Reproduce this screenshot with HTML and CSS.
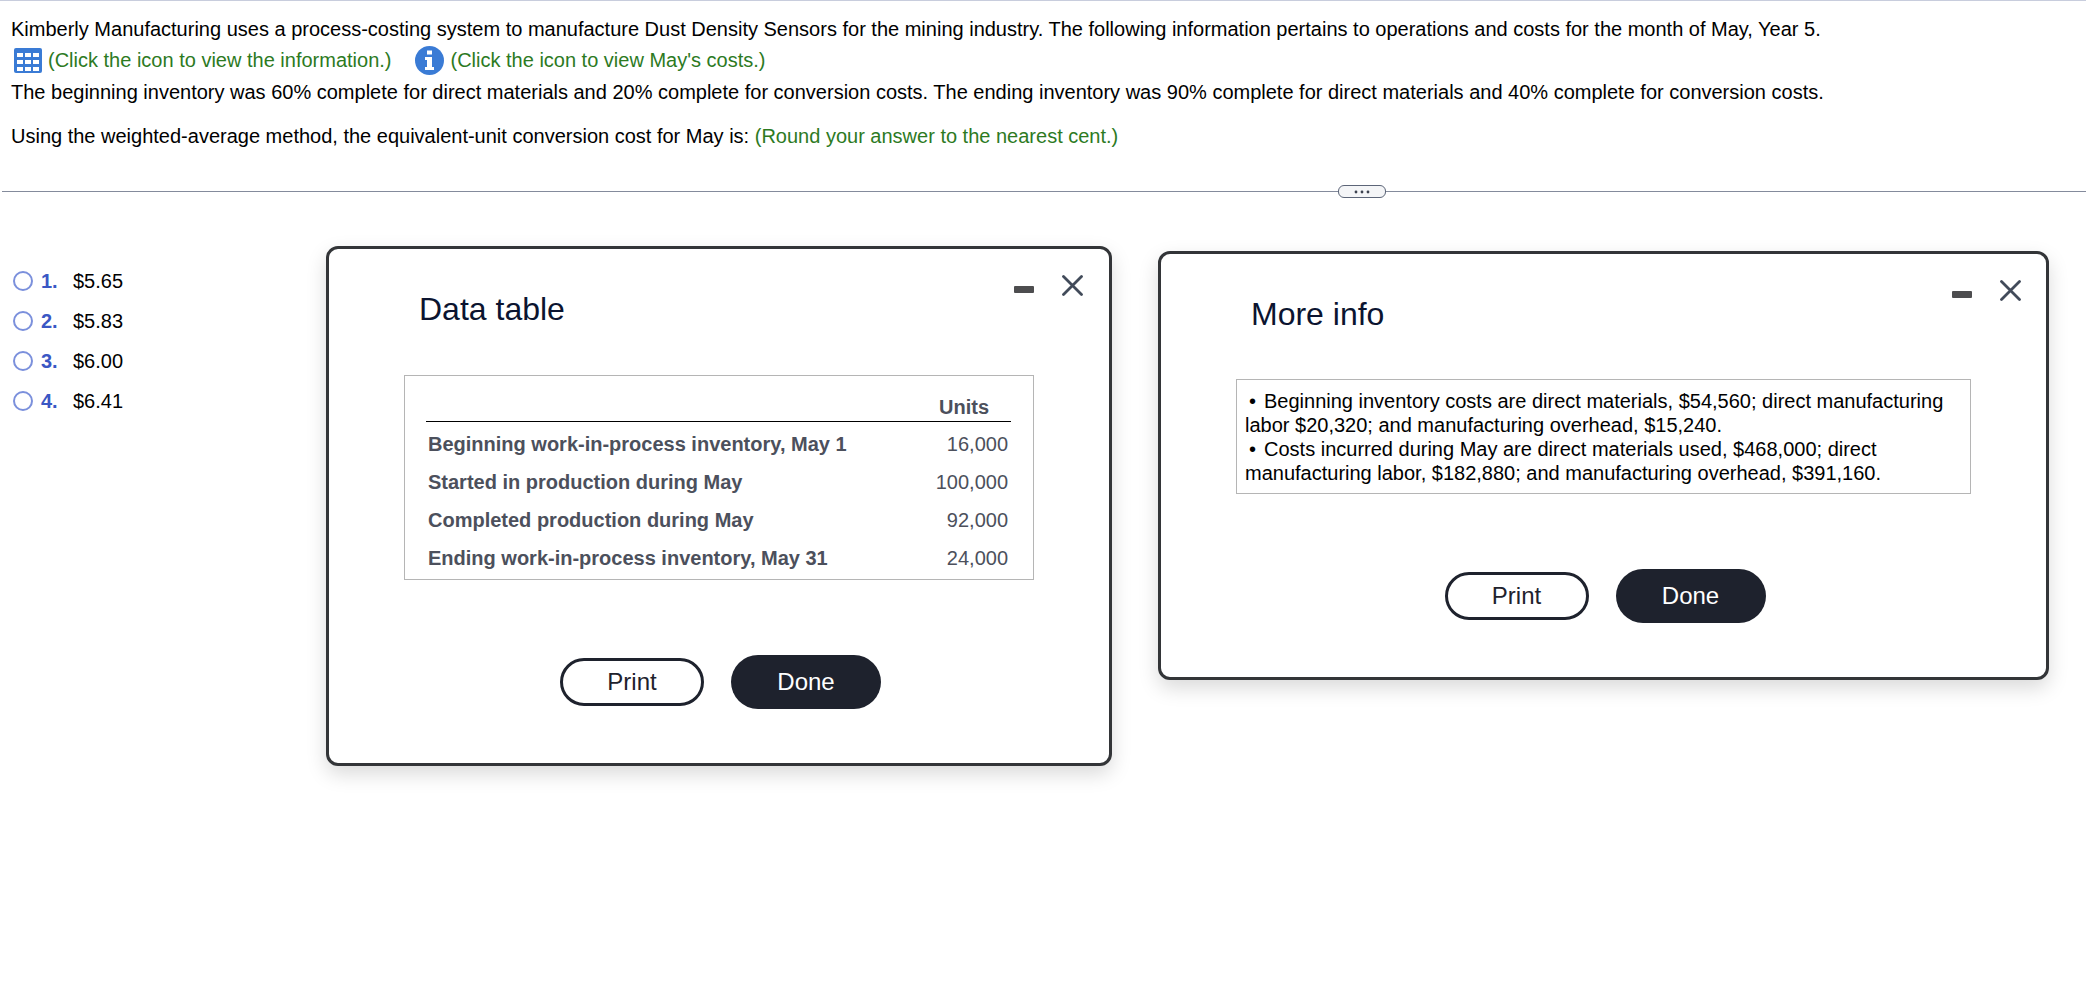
FILE: index.html
```html
<!DOCTYPE html>
<html lang="en">
<head>
    <meta charset="UTF-8">
    <meta name="viewport" content="width=device-width, initial-scale=1.0">
    <title>Process Costing Question</title>
    <link rel="stylesheet" href="styles.css">
</head>
<body>
    <section class="question">
        <p>Kimberly Manufacturing uses a process-costing system to manufacture Dust Density Sensors for the mining industry. The following information pertains to operations and costs for the month of May, Year 5.</p>
        <div class="links">
            <button type="button" class="iconLink">
                <svg width="28" height="25" viewBox="0 0 28 25" aria-hidden="true">
                    <rect width="28" height="25" rx="2" fill="#3a7bd5"/>
                    <g fill="#fff">
                        <rect x="3" y="5" width="6" height="4"/><rect x="11" y="5" width="6" height="4"/><rect x="19" y="5" width="6" height="4"/>
                        <rect x="3" y="12" width="6" height="4"/><rect x="11" y="12" width="6" height="4"/><rect x="19" y="12" width="6" height="4"/>
                        <rect x="3" y="19" width="6" height="4"/><rect x="11" y="19" width="6" height="4"/><rect x="19" y="19" width="6" height="4"/>
                    </g>
                </svg>
                <span>(Click the icon to view the information.)</span>
            </button>
            <button type="button" class="iconLink">
                <svg width="29" height="29" viewBox="0 0 29 29" aria-hidden="true">
                    <circle cx="14.5" cy="14.5" r="14.5" fill="#3a7bd5"/>
                    <path fill="#fff" d="M12 4.5h5v4h-5zM10 11h7v10h2v3h-9v-3h2v-7h-2z"/>
                </svg>
                <span>(Click the icon to view May's costs.)</span>
            </button>
        </div>
        <p>The beginning inventory was 60% complete for direct materials and 20% complete for conversion costs. The ending inventory was 90% complete for direct materials and 40% complete for conversion costs.</p>
        <p class="ask">Using the weighted-average method, the equivalent-unit conversion cost for May is: <span class="hint">(Round your answer to the nearest cent.)</span></p>
    </section>

    <div class="divider">
        <button type="button" class="handle" aria-label="Resize">
            <svg width="20" height="4" viewBox="0 0 20 4" fill="#3c4250" aria-hidden="true">
                <circle cx="4" cy="2" r="1.4"/><circle cx="10" cy="2" r="1.4"/><circle cx="16" cy="2" r="1.4"/>
            </svg>
        </button>
    </div>

    <main>
        <form class="choices">
            <label><input type="radio" name="answer" value="1"><b>1.</b><span>$5.65</span></label>
            <label><input type="radio" name="answer" value="2"><b>2.</b><span>$5.83</span></label>
            <label><input type="radio" name="answer" value="3"><b>3.</b><span>$6.00</span></label>
            <label><input type="radio" name="answer" value="4"><b>4.</b><span>$6.41</span></label>
        </form>

        <section class="dialog">
            <header>
                <h2>Data table</h2>
                <div class="controls">
                    <button type="button" class="minimize" aria-label="Minimize"></button>
                    <button type="button" class="close" aria-label="Close">
                        <svg width="21" height="21" viewBox="0 0 21 21" aria-hidden="true"><path d="M1.5 1.5l18 18M19.5 1.5l-18 18" stroke="#424b5a" stroke-width="2.8" stroke-linecap="round"/></svg>
                    </button>
                </div>
            </header>
            <div class="box tableBox">
                <table>
                    <thead>
                        <tr><td></td><th scope="col">Units</th></tr>
                    </thead>
                    <tbody>
                        <tr><th scope="row">Beginning work-in-process inventory, May 1</th><td>16,000</td></tr>
                        <tr><th scope="row">Started in production during May</th><td>100,000</td></tr>
                        <tr><th scope="row">Completed production during May</th><td>92,000</td></tr>
                        <tr><th scope="row">Ending work-in-process inventory, May 31</th><td>24,000</td></tr>
                    </tbody>
                </table>
            </div>
            <footer>
                <button type="button" class="print">Print</button>
                <button type="button" class="done">Done</button>
            </footer>
        </section>

        <section class="dialog info">
            <header>
                <h2>More info</h2>
                <div class="controls">
                    <button type="button" class="minimize" aria-label="Minimize"></button>
                    <button type="button" class="close" aria-label="Close">
                        <svg width="21" height="21" viewBox="0 0 21 21" aria-hidden="true"><path d="M1.5 1.5l18 18M19.5 1.5l-18 18" stroke="#424b5a" stroke-width="2.8" stroke-linecap="round"/></svg>
                    </button>
                </div>
            </header>
            <ul class="box">
                <li>Beginning inventory costs are direct materials, $54,560; direct manufacturing labor $20,320; and manufacturing overhead, $15,240.</li>
                <li>Costs incurred during May are direct materials used, $468,000; direct manufacturing labor, $182,880; and manufacturing overhead, $391,160.</li>
            </ul>
            <footer>
                <button type="button" class="print">Print</button>
                <button type="button" class="done">Done</button>
            </footer>
        </section>
    </main>
</body>
</html>
```
FILE: styles.css
```css
* {
    box-sizing: border-box;
}

body {
    margin: 0;
    border-top: 1px solid #c8cddd;
    background-color: #fff;
    color: #000;
    font-family: "Liberation Sans", Arial, sans-serif;
    font-size: 20px;
    line-height: 24px;
}

button {
    padding: 0;
    border: none;
    background: none;
    font: inherit;
    cursor: pointer;
}

.question {
    padding: 16px 11px 0;
}

.question p {
    margin: 0;
}

.links {
    display: flex;
    gap: 24px;
    height: 39px;
    padding-left: 3px;
}

.iconLink {
    display: flex;
    align-items: center;
    gap: 6px;
    color: #2d7a1f;
}

.iconLink span {
    padding-bottom: 2px;
}

.question .ask {
    margin-top: 20px;
}

.hint {
    color: #2d7a1f;
}

.divider {
    position: relative;
    height: 1px;
    margin: 43px 0 0 2px;
    background-color: #848b9c;
}

.handle {
    position: absolute;
    top: -6px;
    left: 64.1%;
    display: flex;
    align-items: center;
    justify-content: center;
    width: 48px;
    height: 13px;
    border: 1px solid #5c6578;
    border-radius: 6px;
    background-color: #f4f5f7;
}

main {
    display: grid;
    grid-template-columns: 280px 786fr 891fr;
    align-items: start;
    gap: 46px;
    padding: 54px 37px 40px 0;
}

.choices {
    padding: 15px 0 0 13px;
}

.choices label {
    display: flex;
    align-items: center;
    height: 40px;
}

.choices input {
    appearance: none;
    width: 20px;
    height: 20px;
    margin: 0 8px 0 0;
    border: 2px solid #7b90dc;
    border-radius: 50%;
}

.choices input:checked {
    background-color: #3f5cc4;
}

.choices b {
    width: 32px;
    color: #3a57c4;
}

.dialog {
    border: 3px solid #333538;
    border-radius: 12px;
    background-color: #fff;
    box-shadow: 0 8px 20px rgba(0, 0, 0, 0.15);
}

.info {
    margin-top: 5px;
}

.dialog header {
    display: flex;
    align-items: flex-start;
    justify-content: space-between;
    height: 126px;
    padding: 26px 26px 0 90px;
}

.dialog h2 {
    margin: 14px 0 0;
    color: #0b1430;
    font-size: 32px;
    font-weight: normal;
    line-height: 40px;
}

.info header {
    height: 125px;
    padding-right: 25px;
}

.controls {
    display: flex;
    align-items: center;
    gap: 28px;
}

.minimize {
    width: 20px;
    height: 7px;
    margin-top: 7px;
    border-radius: 1px;
    background-color: #4d4d4f;
}

.close {
    display: flex;
}

.box {
    margin: 0 75px;
    border: 1px solid #b5b5b5;
}

.tableBox {
    padding: 17px 22px 5px 21px;
    color: #4c505c;
}

table {
    width: 100%;
    border-collapse: collapse;
}

th,
td {
    height: 38px;
    padding: 7px 3px 0 2px;
    text-align: right;
}

tbody th {
    text-align: left;
}

thead th,
thead td {
    height: 28px;
    padding: 2px 22px 2px 0;
    border-bottom: 1px solid #000;
}

ul.box {
    margin: 0 75px;
    padding: 9px 8px 8px;
    list-style: none;
}

.info li::before {
    content: "•";
    margin: 0 8px 0 4px;
}

.dialog footer {
    display: flex;
    align-items: center;
    justify-content: center;
    gap: 27px;
    padding: 75px 0 54px 3px;
}

.print,
.done {
    border-radius: 27px;
    font-size: 24px;
}

.print {
    width: 144px;
    height: 48px;
    border: 3px solid #1e222d;
    color: #1e222d;
}

.done {
    width: 150px;
    height: 54px;
    background-color: #1e222d;
    color: #fff;
}
```
